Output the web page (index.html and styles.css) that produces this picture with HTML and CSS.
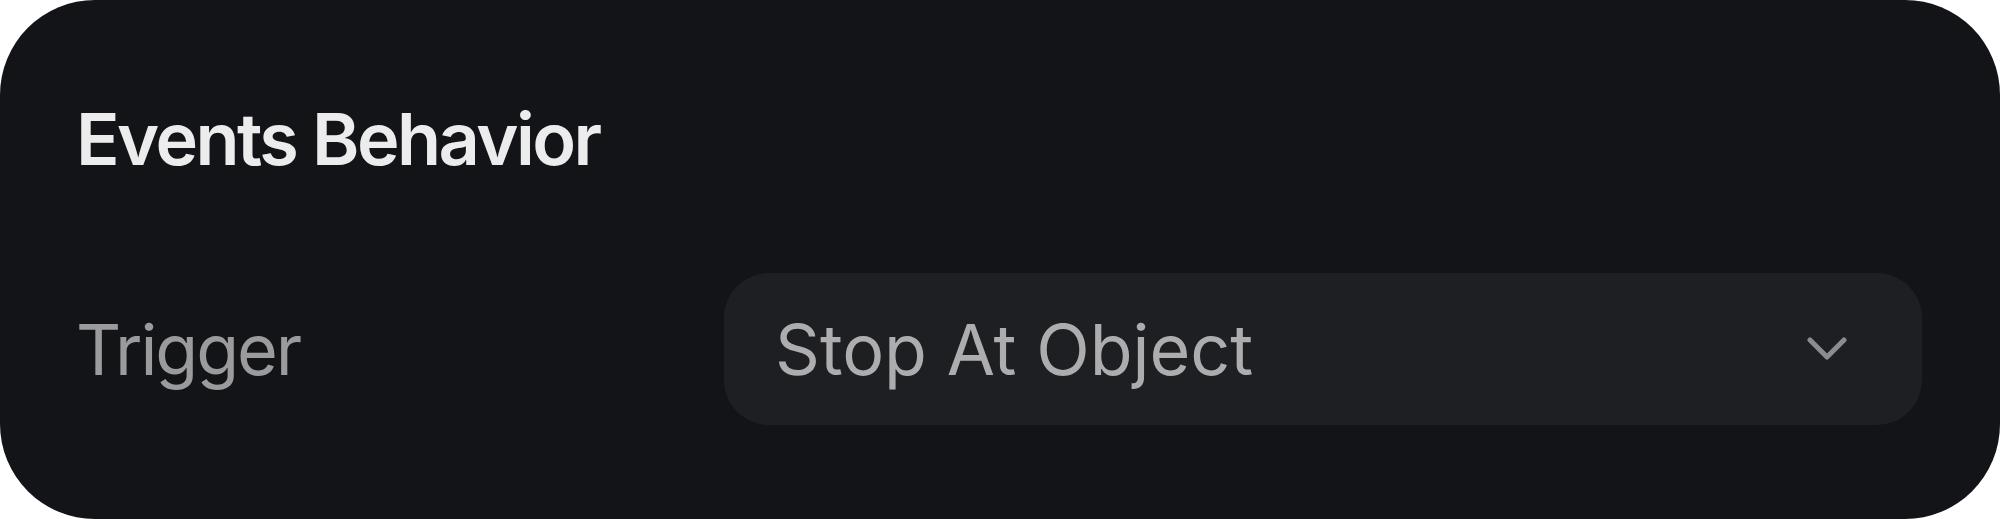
FILE: index.html
```html
<!DOCTYPE html>
<html lang="en">
<head>
    <meta charset="UTF-8">
    <meta name="viewport" content="width=device-width, initial-scale=1.0">
    <title>Events Behavior</title>
    <link rel="stylesheet" href="styles.css">
</head>
<body>
    <div class="panel">
        <h2 class="panel-title">Events Behavior</h2>

        <div class="field">
            <span class="field-label">Trigger</span>
            <div class="select">
                <span class="select-value">Stop At Object</span>
                <svg class="select-chevron" viewBox="0 0 40 26" width="40" height="26">
                    <path d="M3 4 L20 21 L37 4" fill="none" stroke="currentColor" stroke-width="5" stroke-linecap="round" stroke-linejoin="round"/>
                </svg>
            </div>
        </div>
    </div>
</body>
</html>
```

FILE: styles.css
```css
html, body {
    margin: 0;
    padding: 0;
    background-color: #ffffff;
}
body {
    font-family: Inter, "Noto Sans", sans-serif;
}
.panel {
    box-sizing: border-box;
    height: 519px;
    background-color: #131418;
    border-radius: 95px;
    padding: 96px 78px 0 76px;
}
.panel-title {
    margin: 0;
    font-size: 72px;
    line-height: 1.2;
    font-weight: 600;
    letter-spacing: -0.035em;
    color: #ececec;
}
.field {
    display: grid;
    grid-template-columns: 648px 1fr;
    align-items: center;
    margin-top: 91px;
}
.field-label {
    font-size: 70px;
    letter-spacing: -0.03em;
    color: #9b9b9d;
}
.select {
    display: flex;
    align-items: center;
    justify-content: space-between;
    height: 152px;
    padding: 0 75px 0 51px;
    background-color: #1e1f23;
    border-radius: 45px;
}
.select-value {
    font-size: 70px;
    color: #adadaf;
}
.select-chevron {
    color: #8c8c8f;
}
```
